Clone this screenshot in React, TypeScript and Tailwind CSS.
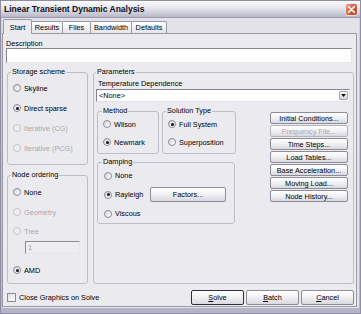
import type { ReactNode } from "react";

const FONT = "font-['Liberation_Sans',Arial,sans-serif]";

function Radio({ checked, disabled }: { checked?: boolean; disabled?: boolean }) {
  return (
    <span
      className={`w-[8px] h-[8px] rounded-full border shrink-0 flex items-center justify-center ${
        disabled
          ? "border-[#c4c4cc] bg-[#efeff1]"
          : "border-[#8a8a9c] bg-gradient-to-br from-[#d6d6de] to-white"
      }`}
    >
      {checked && <span className="w-[3px] h-[3px] rounded-full bg-[#111]" />}
    </span>
  );
}

function RadioRow({
  label,
  checked,
  disabled,
  h = "h-[20px]",
  children,
}: {
  label: string;
  checked?: boolean;
  disabled?: boolean;
  h?: string;
  children?: ReactNode;
}) {
  return (
    <div className={`flex items-center ${h}`}>
      <Radio checked={checked} disabled={disabled} />
      <span className={`ml-[3px] ${disabled ? "text-[#a8a8ae]" : "text-black"}`}>{label}</span>
      {children}
    </div>
  );
}

function Group({
  title,
  className,
  legendMl = "ml-[3px]",
  children,
}: {
  title: string;
  className: string;
  legendMl?: string;
  children: ReactNode;
}) {
  return (
    <fieldset className={`border border-[#bebec8] rounded-[3px] shrink-0 ${className}`}>
      <legend className={`${legendMl} px-[1px] leading-[8px]`}>{title}</legend>
      {children}
    </fieldset>
  );
}

function Btn({
  children,
  className = "",
  disabled,
  isDefault,
}: {
  children: ReactNode;
  className?: string;
  disabled?: boolean;
  isDefault?: boolean;
}) {
  return (
    <div
      className={`flex items-center justify-center rounded-[2px] border bg-gradient-to-b from-white via-[#f1f1f4] to-[#d8d8de] ${
        isDefault ? "border-[#30303c]" : disabled ? "border-[#b4b4bc]" : "border-[#8c8c9a]"
      } ${disabled ? "text-[#a8a8ae]" : "text-black"} ${className}`}
    >
      {children}
    </div>
  );
}

export default function App() {
  return (
    <div className={`w-[361px] h-[314px] bg-[#8e8ea2] p-[1px] overflow-hidden ${FONT} text-[7.3px] leading-[9px] text-black`}>
      <div className="w-full h-full flex flex-col bg-gradient-to-b from-[#d4d4de] to-[#b4b4c4]">
        {/* Title bar */}
        <div className="h-[17px] shrink-0 flex items-center justify-between pl-[3px] pr-[2px] bg-gradient-to-b from-[#fcfcfe] via-[#e2e2ea] to-[#b8b8c8] border-b border-[#9a9aac]">
          <span className="font-bold text-[8.5px] text-[#101018]">Linear Transient Dynamic Analysis</span>
          <div className="w-[13px] h-[13px] rounded-[3px] border border-[#f4e4e0] bg-gradient-to-br from-[#ec9c88] via-[#d8603f] to-[#b8381f] flex items-center justify-center">
            <svg width="9" height="9" viewBox="0 0 9 9">
              <path d="M1.5 1.5 L7.5 7.5 M7.5 1.5 L1.5 7.5" stroke="white" strokeWidth="1.6" strokeLinecap="round" />
            </svg>
          </div>
        </div>

        {/* Client area */}
        <div className="flex-1 mx-[1px] mb-[5px] bg-[#e3e2e8] flex flex-col">
          {/* Tabs */}
          <div className="h-[14px] mt-[1px] ml-[1px] flex items-end relative z-10">
            <div className="w-[29px] h-[15px] mb-[-1px] border border-b-0 border-[#9a9aa6] rounded-t-[2px] bg-[#ebebef] flex items-center justify-center">
              Start
            </div>
            <div className="w-[31px] h-[12px] border border-b-0 border-l-0 border-[#9a9aa6] rounded-tr-[2px] bg-gradient-to-b from-white to-[#e4e4ea] flex items-center justify-center">
              Results
            </div>
            <div className="w-[28px] h-[12px] border border-b-0 border-l-0 border-[#9a9aa6] rounded-tr-[2px] bg-gradient-to-b from-white to-[#e4e4ea] flex items-center justify-center">
              Files
            </div>
            <div className="w-[41px] h-[12px] border border-b-0 border-l-0 border-[#9a9aa6] rounded-tr-[2px] bg-gradient-to-b from-white to-[#e4e4ea] flex items-center justify-center">
              Bandwidth
            </div>
            <div className="w-[35px] h-[12px] border border-b-0 border-l-0 border-[#9a9aa6] rounded-tr-[2px] bg-gradient-to-b from-white to-[#e4e4ea] flex items-center justify-center">
              Defaults
            </div>
          </div>

          {/* Tab panel */}
          <div className="w-[355px] h-[274px] border border-[#9a9aa6] bg-[#ebebef] flex flex-col">
            <div className="pl-[3px] mt-[5px]">Description</div>
            <div className="ml-[3px] w-[346px] h-[15px] bg-white border border-t-[#85858f] border-l-[#85858f] border-b-[#e6e6ea] border-r-[#e6e6ea]" />

            <div className="flex mt-[5px] pl-[4px]">
              {/* Left column */}
              <div className="w-[81px] flex flex-col">
                <Group title="Storage scheme" className="h-[97px]">
                  <div className="pl-[5px] pt-[2px]">
                    <RadioRow label="Skyline" />
                    <RadioRow label="Direct sparse" checked />
                    <RadioRow label="Iterative (CG)" disabled />
                    <RadioRow label="Iterative (PCG)" disabled />
                  </div>
                </Group>
                <Group title="Node ordering" className="h-[113px] mt-[6px]">
                  <div className="pl-[5px] pt-[3px]">
                    <RadioRow label="None" />
                    <RadioRow label="Geometry" disabled />
                    <RadioRow label="Tree" disabled h="h-[18px]" />
                    <div className="ml-[12px] mt-[1px] w-[55px] h-[13px] border border-t-[#8a8a94] border-l-[#8a8a94] border-b-[#e8e8ec] border-r-[#e8e8ec] bg-[#eeeef1] text-[#a0a0a6] pl-[2px] flex items-center">
                      1
                    </div>
                    <div className="mt-[6px]">
                      <RadioRow label="AMD" checked />
                    </div>
                  </div>
                </Group>
              </div>

              {/* Parameters */}
              <Group title="Parameters" className="w-[261px] h-[216px] ml-[5px]" legendMl="ml-[2px]">
                <div className="px-[1px]">
                  <div className="pl-[3px] mt-[3px]">Temperature Dependence</div>
                  <div className="ml-[1px] mt-[1px] w-[254px] h-[13px] bg-white border border-t-[#85858f] border-l-[#85858f] border-b-[#e2e2e6] border-r-[#e2e2e6] flex items-center justify-between pl-[2px] pr-[1px]">
                    <span>&lt;None&gt;</span>
                    <div className="w-[9px] h-[9px] border border-[#a4a4b0] rounded-[1px] bg-gradient-to-b from-white to-[#d4d4dc] flex items-center justify-center">
                      <svg width="5" height="3" viewBox="0 0 5 3">
                        <path d="M0 0 H5 L2.5 3 Z" fill="#111" />
                      </svg>
                    </div>
                  </div>

                  <div className="flex mt-[5px]">
                    <div className="ml-[2px] flex flex-col">
                      <div className="flex">
                        <Group title="Method" className="w-[62px] h-[47px]" legendMl="ml-[4px]">
                          <div className="pl-[5px]">
                            <RadioRow label="Wilson" h="h-[18px]" />
                            <RadioRow label="Newmark" checked h="h-[18px]" />
                          </div>
                        </Group>
                        <Group title="Solution Type" className="w-[74px] h-[47px] ml-[3px]" legendMl="ml-[3px]">
                          <div className="pl-[5px]">
                            <RadioRow label="Full System" checked h="h-[18px]" />
                            <RadioRow label="Superposition" h="h-[18px]" />
                          </div>
                        </Group>
                      </div>
                      <Group title="Damping" className="w-[138px] h-[66px] mt-[4px]" legendMl="ml-[4px]">
                        <div className="pl-[6px]">
                          <RadioRow label="None" h="h-[19px]" />
                          <div className="flex items-center h-[19px]">
                            <Radio checked />
                            <span className="ml-[3px] w-[35px]">Rayleigh</span>
                            <Btn className="w-[76px] h-[15px]">Factors...</Btn>
                          </div>
                          <RadioRow label="Viscous" h="h-[19px]" />
                        </div>
                      </Group>
                    </div>

                    <div className="ml-[34px] mt-[5px] w-[78px] flex flex-col gap-[1px]">
                      <Btn className="h-[12px]">Initial Conditions...</Btn>
                      <Btn className="h-[12px]" disabled>
                        Frequency File...
                      </Btn>
                      <Btn className="h-[12px]">Time Steps...</Btn>
                      <Btn className="h-[12px]">Load Tables...</Btn>
                      <Btn className="h-[12px]">Base Acceleration...</Btn>
                      <Btn className="h-[12px]">Moving Load...</Btn>
                      <Btn className="h-[12px]">Node History...</Btn>
                    </div>
                  </div>
                </div>
              </Group>
            </div>

            {/* Bottom row */}
            <div className="flex items-center h-[15px] mt-[6px] pl-[4px] pr-[2px]">
              <span className="w-[9px] h-[9px] border border-[#8a8a98] bg-gradient-to-br from-[#dcdce4] to-white shrink-0" />
              <span className="ml-[3px]">Close Graphics on Solve</span>
              <div className="ml-auto flex gap-[2px]">
                <Btn className="w-[53px] h-[15px]" isDefault>
                  <span>
                    <span className="underline">S</span>olve
                  </span>
                </Btn>
                <Btn className="w-[53px] h-[15px]">
                  <span>
                    <span className="underline">B</span>atch
                  </span>
                </Btn>
                <Btn className="w-[53px] h-[15px]">
                  <span>
                    <span className="underline">C</span>ancel
                  </span>
                </Btn>
              </div>
            </div>
          </div>
        </div>
      </div>
    </div>
  );
}
